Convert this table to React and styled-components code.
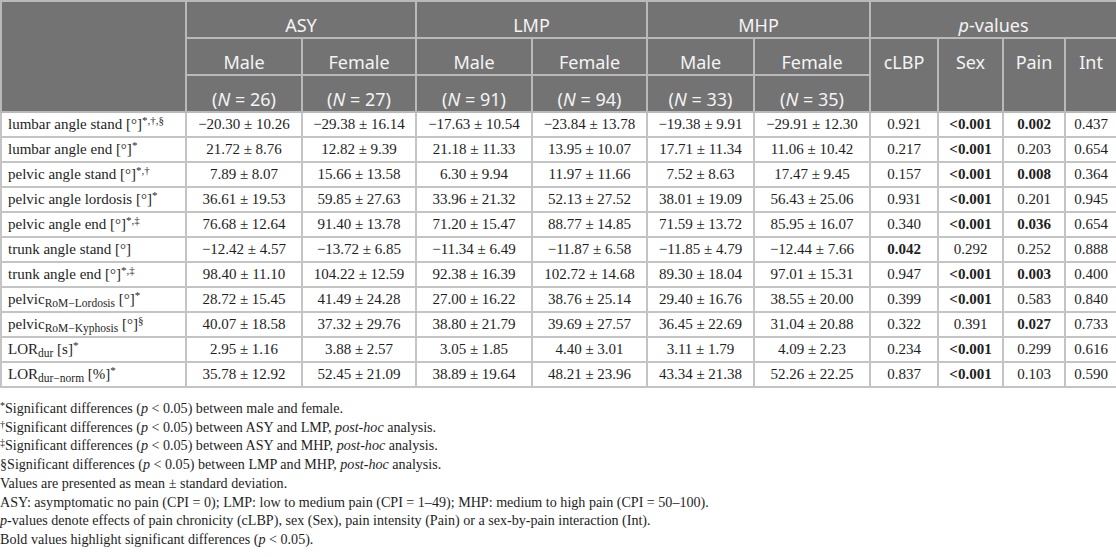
import React from 'react';
import styled, { createGlobalStyle } from 'styled-components';

const GlobalStyle = createGlobalStyle`
  html, body {
    margin: 0;
    padding: 0;
    background: #ffffff;
  }
`;

const Page = styled.div`
  width: 1116px;
  font-family: "Liberation Serif", "Times New Roman", serif;
  color: #1e1e1e;
`;

const Table = styled.table`
  width: 1116px;
  border-collapse: collapse;
  table-layout: fixed;
  border: 2px solid #c4c4c4;
`;

const HeadCell = styled.th`
  box-sizing: border-box;
  background: #737373;
  color: #f4f4f4;
  font-family: "Noto Sans", "Open Sans", sans-serif;
  font-weight: 400;
  font-size: 18px;
  line-height: 22px;
  height: 37px;
  padding: 12px 4px 0;
  vertical-align: top;
  text-align: center;
  border: 2px solid #b9b9b9;
  white-space: nowrap;
`;

const Cell = styled.td`
  font-size: 15px;
  line-height: 19px;
  height: 21px;
  padding: 1px 6px;
  text-align: ${(p) => (p.$label ? 'left' : 'center')};
  font-weight: ${(p) => (p.$bold ? 700 : 400)};
  border: 2px solid #c4c4c4;
  white-space: nowrap;
`;

const Sup = styled.sup`
  font-size: 11px;
  line-height: 0;
  vertical-align: 5px;
`;

const Sub = styled.sub`
  font-size: 11.5px;
  line-height: 0;
  vertical-align: -3px;
`;

const Notes = styled.div`
  padding-top: 11px;
  font-size: 14.1px;
  line-height: 18.7px;
`;

const Note = styled.div`
  white-space: nowrap;
`;

const NoteMark = styled.sup`
  font-size: 10px;
  line-height: 0;
  vertical-align: 4px;
`;

const cols = [185, 116, 114, 116, 115, 107, 116, 68, 65, 62, 52];

const b = (v) => ({ v, bold: true });

const rows = [
  {
    label: <>lumbar angle stand [°]<Sup>*,†,§</Sup></>,
    vals: ['−20.30 ± 10.26', '−29.38 ± 16.14', '−17.63 ± 10.54', '−23.84 ± 13.78', '−19.38 ± 9.91', '−29.91 ± 12.30'],
    p: ['0.921', b('<0.001'), b('0.002'), '0.437'],
  },
  {
    label: <>lumbar angle end [°]<Sup>*</Sup></>,
    vals: ['21.72 ± 8.76', '12.82 ± 9.39', '21.18 ± 11.33', '13.95 ± 10.07', '17.71 ± 11.34', '11.06 ± 10.42'],
    p: ['0.217', b('<0.001'), '0.203', '0.654'],
  },
  {
    label: <>pelvic angle stand [°]<Sup>*,†</Sup></>,
    vals: ['7.89 ± 8.07', '15.66 ± 13.58', '6.30 ± 9.94', '11.97 ± 11.66', '7.52 ± 8.63', '17.47 ± 9.45'],
    p: ['0.157', b('<0.001'), b('0.008'), '0.364'],
  },
  {
    label: <>pelvic angle lordosis [°]<Sup>*</Sup></>,
    vals: ['36.61 ± 19.53', '59.85 ± 27.63', '33.96 ± 21.32', '52.13 ± 27.52', '38.01 ± 19.09', '56.43 ± 25.06'],
    p: ['0.931', b('<0.001'), '0.201', '0.945'],
  },
  {
    label: <>pelvic angle end [°]<Sup>*,‡</Sup></>,
    vals: ['76.68 ± 12.64', '91.40 ± 13.78', '71.20 ± 15.47', '88.77 ± 14.85', '71.59 ± 13.72', '85.95 ± 16.07'],
    p: ['0.340', b('<0.001'), b('0.036'), '0.654'],
  },
  {
    label: <>trunk angle stand [°]</>,
    vals: ['−12.42 ± 4.57', '−13.72 ± 6.85', '−11.34 ± 6.49', '−11.87 ± 6.58', '−11.85 ± 4.79', '−12.44 ± 7.66'],
    p: [b('0.042'), '0.292', '0.252', '0.888'],
  },
  {
    label: <>trunk angle end [°]<Sup>*,‡</Sup></>,
    vals: ['98.40 ± 11.10', '104.22 ± 12.59', '92.38 ± 16.39', '102.72 ± 14.68', '89.30 ± 18.04', '97.01 ± 15.31'],
    p: ['0.947', b('<0.001'), b('0.003'), '0.400'],
  },
  {
    label: <>pelvic<Sub>RoM−Lordosis</Sub> [°]<Sup>*</Sup></>,
    vals: ['28.72 ± 15.45', '41.49 ± 24.28', '27.00 ± 16.22', '38.76 ± 25.14', '29.40 ± 16.76', '38.55 ± 20.00'],
    p: ['0.399', b('<0.001'), '0.583', '0.840'],
  },
  {
    label: <>pelvic<Sub>RoM−Kyphosis</Sub> [°]<Sup>§</Sup></>,
    vals: ['40.07 ± 18.58', '37.32 ± 29.76', '38.80 ± 21.79', '39.69 ± 27.57', '36.45 ± 22.69', '31.04 ± 20.88'],
    p: ['0.322', '0.391', b('0.027'), '0.733'],
  },
  {
    label: <>LOR<Sub>dur</Sub> [s]<Sup>*</Sup></>,
    vals: ['2.95 ± 1.16', '3.88 ± 2.57', '3.05 ± 1.85', '4.40 ± 3.01', '3.11 ± 1.79', '4.09 ± 2.23'],
    p: ['0.234', b('<0.001'), '0.299', '0.616'],
  },
  {
    label: <>LOR<Sub>dur−norm</Sub> [%]<Sup>*</Sup></>,
    vals: ['35.78 ± 12.92', '52.45 ± 21.09', '38.89 ± 19.64', '48.21 ± 23.96', '43.34 ± 21.38', '52.26 ± 22.25'],
    p: ['0.837', b('<0.001'), '0.103', '0.590'],
  },
];

const groups = [
  { name: 'ASY', n: [26, 27] },
  { name: 'LMP', n: [91, 94] },
  { name: 'MHP', n: [33, 35] },
];

const App = () => {
  return (
    <Page>
      <GlobalStyle />
      <Table>
        <colgroup>
          {cols.map((w, i) => (
            <col key={i} style={{ width: w }} />
          ))}
        </colgroup>
        <thead>
          <tr>
            <HeadCell rowSpan={3} />
            {groups.map((g) => (
              <HeadCell key={g.name} colSpan={2}>{g.name}</HeadCell>
            ))}
            <HeadCell colSpan={4}><i>p</i>-values</HeadCell>
          </tr>
          <tr>
            {groups.map((g) => (
              <React.Fragment key={g.name}>
                <HeadCell>Male</HeadCell>
                <HeadCell>Female</HeadCell>
              </React.Fragment>
            ))}
            <HeadCell rowSpan={2}>cLBP</HeadCell>
            <HeadCell rowSpan={2}>Sex</HeadCell>
            <HeadCell rowSpan={2}>Pain</HeadCell>
            <HeadCell rowSpan={2}>Int</HeadCell>
          </tr>
          <tr>
            {groups.map((g) =>
              g.n.map((n) => (
                <HeadCell key={g.name + n}>(<i>N</i> = {n})</HeadCell>
              ))
            )}
          </tr>
        </thead>
        <tbody>
          {rows.map((r, i) => (
            <tr key={i}>
              <Cell $label>{r.label}</Cell>
              {r.vals.map((v, j) => (
                <Cell key={j}>{v}</Cell>
              ))}
              {r.p.map((v, j) =>
                typeof v === 'string' ? (
                  <Cell key={'p' + j}>{v}</Cell>
                ) : (
                  <Cell key={'p' + j} $bold>{v.v}</Cell>
                )
              )}
            </tr>
          ))}
        </tbody>
      </Table>
      <Notes>
        <Note><NoteMark>*</NoteMark>Significant differences (<i>p</i> &lt; 0.05) between male and female.</Note>
        <Note><NoteMark>†</NoteMark>Significant differences (<i>p</i> &lt; 0.05) between ASY and LMP, <i>post-hoc</i> analysis.</Note>
        <Note><NoteMark>‡</NoteMark>Significant differences (<i>p</i> &lt; 0.05) between ASY and MHP, <i>post-hoc</i> analysis.</Note>
        <Note>§Significant differences (<i>p</i> &lt; 0.05) between LMP and MHP, <i>post-hoc</i> analysis.</Note>
        <Note>Values are presented as mean ± standard deviation.</Note>
        <Note>ASY: asymptomatic no pain (CPI = 0); LMP: low to medium pain (CPI = 1–49); MHP: medium to high pain (CPI = 50–100).</Note>
        <Note><i>p</i>-values denote effects of pain chronicity (cLBP), sex (Sex), pain intensity (Pain) or a sex-by-pain interaction (Int).</Note>
        <Note>Bold values highlight significant differences (<i>p</i> &lt; 0.05).</Note>
      </Notes>
    </Page>
  );
};

export default App;
